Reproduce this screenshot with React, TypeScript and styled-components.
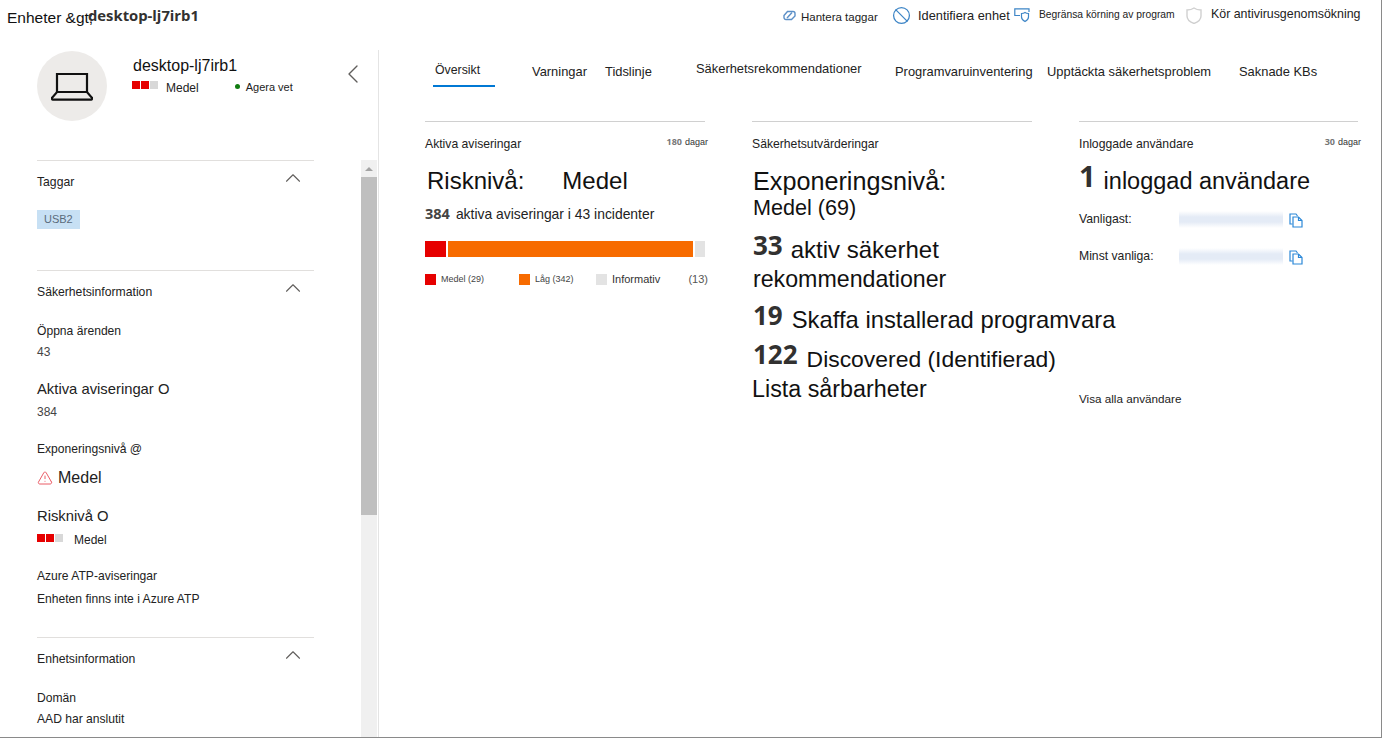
import React from 'react';
import styled, { createGlobalStyle } from 'styled-components';
import { Ban, ChevronLeft, ChevronUp, TriangleAlert } from 'lucide-react';

const GlobalStyle = createGlobalStyle`
  html, body {
    margin: 0;
    padding: 0;
    background: #fff;
    overflow: hidden;
  }
  body {
    font-family: 'Liberation Sans', Arial, sans-serif;
    color: #201f1e;
  }
`;

const Page = styled.div`
  width: 1382px;
  height: 738px;
  box-sizing: border-box;
  border-right: 1px solid #8a8a8a;
  border-bottom: 1px solid #8a8a8a;
  display: flex;
  flex-direction: column;
  overflow: hidden;
`;

const TopBar = styled.header`
  height: 50px;
  flex: none;
  display: flex;
  align-items: flex-start;
  padding-left: 7px;
`;

const CrumbLink = styled.span`
  width: 81px;
  margin-top: 9px;
  font-size: 15.5px;
  line-height: 18px;
  white-space: nowrap;
  color: #111;
`;

const CrumbCurrent = styled.span`
  margin-top: 6px;
  font-family: 'Open Sans', sans-serif;
  font-size: 14.8px;
  line-height: 18px;
  font-weight: 700;
  color: #323130;
`;

const Actions = styled.div`
  margin-left: auto;
  display: flex;
  align-items: center;
  height: 30px;
`;

const Action = styled.div<{ $width: number }>`
  width: ${p => p.$width}px;
  display: flex;
  align-items: center;
  white-space: nowrap;
`;

const ActionLabel = styled.span<{ $size: number; $gap: number; $drop?: number }>`
  font-size: ${p => p.$size}px;
  margin-left: ${p => p.$gap}px;
  margin-top: ${p => p.$drop ?? 0}px;
  color: #222;
`;

const Body = styled.div`
  flex: 1;
  min-height: 0;
  display: flex;
`;

const Sidebar = styled.aside`
  width: 379px;
  flex: none;
  box-sizing: border-box;
  border-right: 1px solid #e4e4e4;
  display: flex;
  flex-direction: column;
`;

const DeviceHeader = styled.div`
  height: 110px;
  flex: none;
  display: flex;
  padding: 1px 0 0 37px;
  box-sizing: border-box;
`;

const Avatar = styled.div`
  width: 70px;
  height: 70px;
  border-radius: 50%;
  background: #edebe9;
  display: flex;
  align-items: center;
  justify-content: center;
  flex: none;
`;

const DeviceText = styled.div`
  margin-left: 26px;
  width: 190px;
`;

const DeviceName = styled.div`
  font-size: 16px;
  line-height: 20px;
  margin-top: 5px;
  color: #111;
`;

const DeviceMeta = styled.div`
  display: flex;
  align-items: center;
  margin: 2px 0 0 -1px;
  height: 20px;
`;

const RiskBars = styled.div<{ $gap: number; $lift: number }>`
  display: flex;
  gap: 1px;
  width: 26px;
  margin-right: ${p => p.$gap}px;
  margin-bottom: ${p => p.$lift}px;
`;

const RiskBar = styled.span<{ $on: boolean }>`
  width: 8px;
  height: 8px;
  background: ${p => (p.$on ? '#e60000' : '#d8d8d8')};
`;

const MetaText = styled.span`
  font-size: 12px;
  color: #222;
`;

const StatusDot = styled.span`
  width: 5px;
  height: 5px;
  border-radius: 50%;
  background: #107c10;
  margin: 0 6px 4px 36px;
`;

const StatusText = styled.span`
  font-size: 11px;
  color: #222;
  margin-bottom: 2px;
`;

const Collapse = styled.div`
  margin: 7px 0 0 14px;
  color: #605e5c;
`;

const SidebarScroll = styled.div`
  flex: 1;
  min-height: 0;
  display: flex;
  overflow: hidden;
`;

const SidebarContent = styled.div`
  width: 277px;
  margin-left: 37px;
  flex: none;
`;

const Section = styled.section<{ $height: number }>`
  border-top: 1px solid #e1dfdd;
  height: ${p => p.$height}px;
  box-sizing: border-box;
`;

const SectionHead = styled.div`
  height: 42px;
  display: flex;
  align-items: center;
  justify-content: space-between;
  font-size: 12.2px;
  color: #222;
`;

const Caret = styled(ChevronUp)`
  margin-right: 8px;
  margin-top: -8px;
  color: #605e5c;
`;

const Tag = styled.span`
  display: inline-block;
  margin-top: 7px;
  background: #c7e0f4;
  color: #5a6b7b;
  font-size: 11px;
  line-height: 19px;
  padding: 0 7px;
`;

const FieldLabel = styled.div<{ $top: number; $large?: boolean }>`
  margin-top: ${p => p.$top}px;
  font-size: ${p => (p.$large ? 14.8 : 12.1)}px;
  line-height: ${p => (p.$large ? 18 : 14)}px;
  color: #222;
`;

const FieldValue = styled.div<{ $top: number }>`
  margin-top: ${p => p.$top}px;
  font-size: 12px;
  line-height: 14px;
  color: #444;
`;

const ExposureValue = styled.div`
  margin-top: 12px;
  display: flex;
  align-items: center;
  gap: 5px;
  font-size: 16px;
  line-height: 20px;
  color: #222;
`;

const RiskRow = styled.div`
  margin-top: 7px;
  display: flex;
  align-items: center;
  height: 16px;
`;

const ScrollTrack = styled.div`
  width: 16px;
  margin-left: 47px;
  flex: none;
  background: #f0f0f0;
  display: flex;
  flex-direction: column;
  align-items: center;
`;

const ScrollArrow = styled.div`
  height: 17px;
  width: 100%;
  display: flex;
  align-items: center;
  justify-content: center;
  &::before {
    content: '';
    border-left: 4px solid transparent;
    border-right: 4px solid transparent;
    border-bottom: 4px solid #a3a3a3;
  }
`;

const ScrollThumb = styled.div`
  width: 100%;
  height: 338px;
  background: #bfbfbf;
`;

const Main = styled.main`
  flex: 1;
  min-width: 0;
  padding-left: 46px;
`;

const Tabs = styled.nav`
  height: 71px;
  display: flex;
  align-items: flex-start;
`;

const Tab = styled.div<{ $width: number; $top: number; $left?: number }>`
  width: ${p => p.$width}px;
  flex: none;
  margin-top: ${p => p.$top}px;
  margin-left: ${p => p.$left ?? 0}px;
  font-size: 12.9px;
  line-height: 16px;
  white-space: nowrap;
  color: #222;
`;

const ActiveTab = styled.div`
  width: 62px;
  height: 25px;
  flex: none;
  margin: 12px 0 0 8px;
  box-sizing: border-box;
  border-bottom: 2px solid #0078d4;
  padding-left: 2px;
  font-size: 12.3px;
  line-height: 16px;
  color: #222;
`;

const Columns = styled.div`
  display: flex;
  gap: 47px;
`;

const Card = styled.section<{ $width: number }>`
  width: ${p => p.$width}px;
  border-top: 1px solid #d0d0d0;
  flex: none;
`;

const CardHead = styled.div`
  height: 43px;
  display: flex;
  justify-content: space-between;
  align-items: center;
  font-size: 12.2px;
  color: #222;
`;

const Days = styled.span`
  font-size: 9px;
  color: #333;
  margin-right: -3px;
  margin-top: -4px;
  b {
    font-family: 'Open Sans', sans-serif;
    color: #777;
    margin-right: 3px;
  }
`;

const BigLine = styled.div<{ $top: number; $left?: number; $size: number }>`
  font-size: ${p => p.$size}px;
  line-height: 30px;
  margin-top: ${p => p.$top}px;
  margin-left: ${p => p.$left ?? 0}px;
  color: #111;
  white-space: nowrap;
`;

const RiskGap = styled.span`
  display: inline-block;
  width: 38px;
`;

const Stat = styled.b<{ $size: number; $gap: number; $lift?: number }>`
  font-family: 'Open Sans', sans-serif;
  font-size: ${p => p.$size}px;
  line-height: 1;
  font-weight: 700;
  color: #323130;
  margin-right: ${p => p.$gap}px;
  vertical-align: ${p => p.$lift ?? 3}px;
`;

const Incidents = styled.div`
  margin-top: 9px;
  font-size: 13.9px;
  line-height: 18px;
  color: #222;
  b {
    font-family: 'Open Sans', sans-serif;
    font-size: 14.5px;
    color: #444;
    margin-right: 6px;
  }
`;

const SeverityBar = styled.div`
  margin-top: 18px;
  display: flex;
  gap: 2px;
  height: 16px;
`;

const Severity = styled.span<{ $color: string; $width: number }>`
  width: ${p => p.$width}px;
  background: ${p => p.$color};
`;

const Legend = styled.div`
  margin-top: 15px;
  display: flex;
  align-items: center;
  height: 14px;
`;

const LegendItem = styled.div<{ $width: number }>`
  width: ${p => p.$width}px;
  flex: none;
  display: flex;
  align-items: center;
  gap: 5px;
  font-size: 9px;
  color: #444;
  white-space: nowrap;
`;

const Swatch = styled.span<{ $color: string }>`
  width: 11px;
  height: 11px;
  background: ${p => p.$color};
`;

const LegendLarge = styled.span`
  font-size: 11px;
  color: #333;
`;

const LegendCount = styled.span`
  font-size: 11px;
  color: #555;
  margin-left: auto;
  margin-right: -3px;
`;

const ScoreLine = styled.div<{ $top: number; $size: number; $left?: number }>`
  font-size: ${p => p.$size}px;
  line-height: 26px;
  height: 26px;
  margin-top: ${p => p.$top}px;
  margin-left: ${p => p.$left ?? 1}px;
  color: #111;
  white-space: nowrap;
`;

const UserRow = styled.div<{ $top: number }>`
  display: flex;
  align-items: center;
  height: 20px;
  margin-top: ${p => p.$top}px;
  font-size: 12.2px;
  color: #222;
`;

const UserLabel = styled.span`
  width: 100px;
  flex: none;
`;

const Redacted = styled.span`
  width: 104px;
  height: 20px;
  flex: none;
  background: linear-gradient(180deg, #fff 10%, #e4ebf6 40%, #e4ebf6 65%, #fff 95%);
`;

const CopyButton = styled.svg`
  margin-left: 6px;
  margin-top: 3px;
  flex: none;
`;

const ViewAll = styled.div`
  margin-top: 126px;
  font-size: 11.7px;
  color: #222;
`;

const Risk: React.FC<{ gap: number; lift: number }> = ({ gap, lift }) => (
  <RiskBars $gap={gap} $lift={lift}>
    <RiskBar $on />
    <RiskBar $on />
    <RiskBar $on={false} />
  </RiskBars>
);

const LaptopIcon: React.FC = () => (
  <svg width="42" height="29" viewBox="0 0 42 29" fill="none" stroke="#111" strokeWidth="2.2">
    <path d="M6 20V2h30v18" />
    <path d="M6 20h30l4.600 5.400a1.200 1.200 0 0 1-.9 2.200H2.300a1.200 1.200 0 0 1-.9-2.200z" />
  </svg>
);

const TagIcon: React.FC = () => (
  <svg width="13" height="11" viewBox="0 0 13 11" fill="none" stroke="#5b8fc7" strokeWidth="1.4">
    <path d="M1 5.500 4.500 1.500H10a2 2 0 0 1 2 2V6L8.500 9.500H3A2 2 0 0 1 1 7.500z" />
    <path d="M4 8 9 2.500" />
  </svg>
);

const ScreenShieldIcon: React.FC = () => (
  <svg width="17" height="15" viewBox="0 0 17 15" fill="none" stroke="#3d85c6" strokeWidth="1.2">
    <path d="M6 7.500H.8V.8H15V4" />
    <path d="M7.500 5.500c1.500 0 2.500-.3 3.500-1 1 .7 2 1 3.500 1v3.500c0 2-1.500 3.500-3.500 4.500-2-1-3.500-2.500-3.500-4.500z" />
  </svg>
);

const ShieldOutline: React.FC = () => (
  <svg width="16" height="17" viewBox="0 0 16 17" fill="none" stroke="#d0d0d0" strokeWidth="1.4">
    <path d="M8 1c2 1.500 4.500 2 7 2v6c0 4-3 6-7 7.500C4 15 1 13 1 9V3c2.500 0 5-.5 7-2z" />
  </svg>
);

const CopyIcon: React.FC = () => (
  <CopyButton width="14" height="15" viewBox="0 0 14 15" fill="none" stroke="#2b88d8" strokeWidth="1.2">
    <path d="M3.500 11H1V1h6l1.500 2" />
    <path d="M4 4h5.500L13 7.500V14H4z" />
    <path d="M9.500 4v3.500H13" />
  </CopyButton>
);

const App: React.FC = () => {
  return (
    <Page>
      <GlobalStyle />
      <TopBar>
        <CrumbLink>Enheter &amp;gt;</CrumbLink>
        <CrumbCurrent>desktop-lj7irb1</CrumbCurrent>
        <Actions>
          <Action $width={109}>
            <TagIcon />
            <ActionLabel $size={11.5} $gap={5} $drop={3}>Hantera taggar</ActionLabel>
          </Action>
          <Action $width={122}>
            <Ban size={19} color="#3d85c6" strokeWidth={1.6} />
            <ActionLabel $size={12.8} $gap={7}>Identifiera enhet</ActionLabel>
          </Action>
          <Action $width={172}>
            <ScreenShieldIcon />
            <ActionLabel $size={10.3} $gap={8} $drop={-2}>Begränsa körning av program</ActionLabel>
          </Action>
          <Action $width={195}>
            <ShieldOutline />
            <ActionLabel $size={12.4} $gap={9} $drop={-2}>Kör antivirusgenomsökning</ActionLabel>
          </Action>
        </Actions>
      </TopBar>
      <Body>
        <Sidebar>
          <DeviceHeader>
            <Avatar>
              <LaptopIcon />
            </Avatar>
            <DeviceText>
              <DeviceName>desktop-lj7irb1</DeviceName>
              <DeviceMeta>
                <Risk gap={8} lift={6} />
                <MetaText>Medel</MetaText>
                <StatusDot />
                <StatusText>Agera vet</StatusText>
              </DeviceMeta>
            </DeviceText>
            <Collapse>
              <ChevronLeft size={32} strokeWidth={1} />
            </Collapse>
          </DeviceHeader>
          <SidebarScroll>
            <SidebarContent>
              <Section $height={110}>
                <SectionHead>
                  Taggar
                  <Caret size={26} strokeWidth={1} />
                </SectionHead>
                <Tag>USB2</Tag>
              </Section>
              <Section $height={367}>
                <SectionHead>
                  Säkerhetsinformation
                  <Caret size={26} strokeWidth={1} />
                </SectionHead>
                <FieldLabel $top={11}>Öppna ärenden</FieldLabel>
                <FieldValue $top={7}>43</FieldValue>
                <FieldLabel $top={21} $large>Aktiva aviseringar O</FieldLabel>
                <FieldValue $top={7}>384</FieldValue>
                <FieldLabel $top={23}>Exponeringsnivå @</FieldLabel>
                <ExposureValue>
                  <TriangleAlert size={16} color="#e8505b" strokeWidth={1.4} />
                  Medel
                </ExposureValue>
                <FieldLabel $top={19} $large>Risknivå O</FieldLabel>
                <RiskRow>
                  <Risk gap={11} lift={4} />
                  <MetaText>Medel</MetaText>
                </RiskRow>
                <FieldLabel $top={21}>Azure ATP-aviseringar</FieldLabel>
                <FieldLabel $top={9}>Enheten finns inte i Azure ATP</FieldLabel>
              </Section>
              <Section $height={120}>
                <SectionHead>
                  Enhetsinformation
                  <Caret size={26} strokeWidth={1} />
                </SectionHead>
                <FieldLabel $top={11}>Domän</FieldLabel>
                <FieldLabel $top={7}>AAD har anslutit</FieldLabel>
              </Section>
            </SidebarContent>
            <ScrollTrack>
              <ScrollArrow />
              <ScrollThumb />
            </ScrollTrack>
          </SidebarScroll>
        </Sidebar>
        <Main>
          <Tabs>
            <ActiveTab>Översikt</ActiveTab>
            <Tab $width={73} $top={14} $left={37}>Varningar</Tab>
            <Tab $width={91} $top={14}>Tidslinje</Tab>
            <Tab $width={199} $top={11}>Säkerhetsrekommendationer</Tab>
            <Tab $width={152} $top={14}>Programvaruinventering</Tab>
            <Tab $width={192} $top={14}>Upptäckta säkerhetsproblem</Tab>
            <Tab $width={80} $top={14}>Saknade KBs</Tab>
          </Tabs>
          <Columns>
            <Card $width={280}>
              <CardHead>
                Aktiva aviseringar
                <Days><b>180</b>dagar</Days>
              </CardHead>
              <BigLine $top={1} $left={2} $size={24}>
                Risknivå:<RiskGap />Medel
              </BigLine>
              <Incidents>
                <b>384</b>aktiva aviseringar i 43 incidenter
              </Incidents>
              <SeverityBar>
                <Severity $color="#e60000" $width={21} />
                <Severity $color="#f76b00" $width={245} />
                <Severity $color="#e3e3e3" $width={10} />
              </SeverityBar>
              <Legend>
                <LegendItem $width={94}><Swatch $color="#e60000" />Medel (29)</LegendItem>
                <LegendItem $width={77}><Swatch $color="#f76b00" />Låg (342)</LegendItem>
                <LegendItem $width={90}><Swatch $color="#e3e3e3" /><LegendLarge>Informativ</LegendLarge></LegendItem>
                <LegendCount>(13)</LegendCount>
              </Legend>
            </Card>
            <Card $width={280}>
              <CardHead>Säkerhetsutvärderingar</CardHead>
              <ScoreLine $top={3} $size={25.2}>Exponeringsnivå:</ScoreLine>
              <ScoreLine $top={1} $size={21.6}>Medel (69)</ScoreLine>
              <ScoreLine $top={11} $size={24}><Stat $size={26} $gap={8}>33</Stat>aktiv säkerhet</ScoreLine>
              <ScoreLine $top={8} $size={23.2}>rekommendationer</ScoreLine>
              <ScoreLine $top={10} $size={23.8}><Stat $size={26} $gap={9}>19</Stat>Skaffa installerad programvara</ScoreLine>
              <ScoreLine $top={13} $size={22.9}><Stat $size={26} $gap={9}>122</Stat>Discovered (Identifierad)</ScoreLine>
              <ScoreLine $top={9} $left={0} $size={23.3}>Lista sårbarheter</ScoreLine>
            </Card>
            <Card $width={279}>
              <CardHead>
                Inloggade användare
                <Days><b>30</b>dagar</Days>
              </CardHead>
              <BigLine $top={-4} $size={23.5}>
                <Stat $size={29} $gap={8} $lift={2}>1</Stat>inloggad användare
              </BigLine>
              <UserRow $top={13}>
                <UserLabel>Vanligast:</UserLabel>
                <Redacted />
                <CopyIcon />
              </UserRow>
              <UserRow $top={17}>
                <UserLabel>Minst vanliga:</UserLabel>
                <Redacted />
                <CopyIcon />
              </UserRow>
              <ViewAll>Visa alla användare</ViewAll>
            </Card>
          </Columns>
        </Main>
      </Body>
    </Page>
  );
};

export default App;
